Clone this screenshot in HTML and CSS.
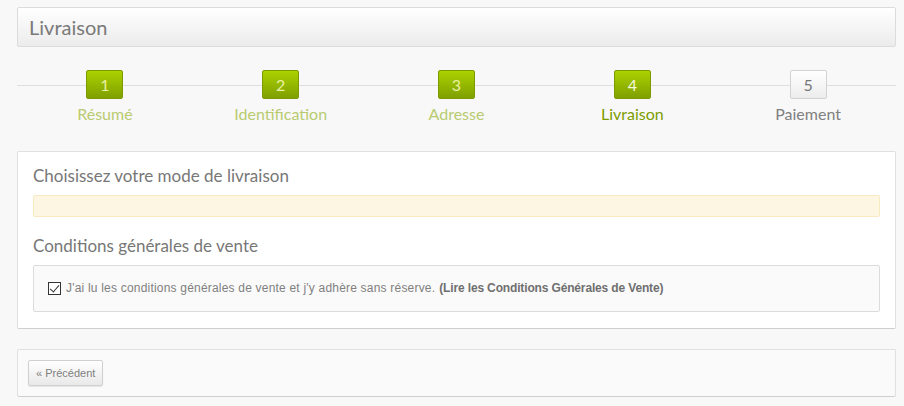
FILE: index.html
```html
<!DOCTYPE html>
<html>
<head>
  <meta charset="utf-8">
  <meta name="viewport" content="width=device-width, initial-scale=1">
  <title>Livraison</title>
  <link rel="stylesheet" href="styles.css">
</head>
<body>
  <div class="page">
    <h1 class="page-title">Livraison</h1>

    <ul class="steps">
      <li class="step step-done"><span class="step-num">1</span><span class="step-label">Résumé</span></li>
      <li class="step step-done"><span class="step-num">2</span><span class="step-label">Identification</span></li>
      <li class="step step-done"><span class="step-num">3</span><span class="step-label">Adresse</span></li>
      <li class="step step-current"><span class="step-num">4</span><span class="step-label">Livraison</span></li>
      <li class="step step-todo"><span class="step-num">5</span><span class="step-label">Paiement</span></li>
    </ul>

    <div class="panel">
      <h3 class="panel-heading">Choisissez votre mode de livraison</h3>
      <div class="alert-box"></div>

      <h3 class="panel-heading">Conditions générales de vente</h3>
      <div class="terms-box">
        <label class="terms-label">
          <input class="terms-check" type="checkbox" checked>
          <span class="terms-text">J'ai lu les conditions générales de vente et j'y adhère sans réserve.</span>
          <a class="terms-link" href="#">(Lire les Conditions Générales de Vente)</a>
        </label>
      </div>
    </div>

    <div class="footer-panel">
      <button class="prev-button">« Précédent</button>
    </div>
  </div>
</body>
</html>
```

FILE: styles.css
```css
body {
  margin: 0;
  background: #f8f8f8;
  font-family: "Liberation Sans", Arial, sans-serif;
  color: #777;
}
.page {
  padding: 7px 8px 0 17px;
}
.page-title {
  margin: 0;
  height: 38px;
  line-height: 38px;
  padding: 0 11px;
  border: 1px solid #dcdcdc;
  border-radius: 2px;
  background: linear-gradient(#ffffff, #ececec);
  font-family: Lato, sans-serif;
  font-weight: normal;
  font-size: 20px;
  color: #7a7a7a;
}

/* steps */
.steps {
  list-style: none;
  margin: 0;
  padding: 0;
  display: flex;
  background: linear-gradient(#dedede, #dedede) no-repeat 0 15px / 100% 1px;
  margin-top: 23px;
}
.step {
  flex: 1;
  display: flex;
  flex-direction: column;
  align-items: center;
}
.step-num {
  width: 35px;
  height: 27px;
  line-height: 27px;
  text-align: center;
  border: 1px solid #7d9a00;
  border-radius: 2px;
  background: linear-gradient(#abd200, #7f9f00);
  color: #e9f1a2;
  font-family: Lato, sans-serif;
  font-size: 16px;
}
.step-current .step-num {
  color: #f4f8dc;
}
.step-todo .step-num {
  border-color: #d2d2d2;
  background: linear-gradient(#ffffff, #ececec);
  color: #777;
}
.step-label {
  margin-top: 5px;
  font-family: Lato, sans-serif;
  font-size: 16px;
  color: #b8cb70;
}
.step-current .step-label {
  color: #7d9c00;
}
.step-todo .step-label {
  color: #808080;
}

/* panels */
.panel {
  margin-top: 28px;
  background: #fff;
  border: 1px solid #e0e0e0;
  border-bottom-color: #cfcfcf;
  border-radius: 2px;
  padding: 13px 15px 16px;
}
.panel-heading {
  margin: 0 0 9px;
  font-family: Lato, sans-serif;
  font-weight: normal;
  font-size: 17px;
  color: #777;
}
.alert-box {
  height: 20px;
  background: #fdf6e3;
  border: 1px solid #faeac4;
  border-radius: 2px;
  margin-bottom: 18px;
}
.terms-box {
  background: #fafafa;
  border: 1px solid #dcdcdc;
  border-radius: 2px;
  padding: 15px 15px 16px;
}
.terms-label {
  display: flex;
  align-items: center;
  gap: 4px;
  font-size: 12px;
  color: #808080;
}
.terms-text {
  letter-spacing: 0.2px;
}
.terms-check {
  appearance: none;
  -webkit-appearance: none;
  position: relative;
  margin: 0 1px 0 -1px;
  width: 13px;
  height: 13px;
  border: 1px solid #333;
  background: #fff;
}
.terms-check:checked::after {
  content: "";
  position: absolute;
  left: 3px;
  top: 0px;
  width: 4px;
  height: 8px;
  border: solid #333;
  border-width: 0 1.5px 1.5px 0;
  transform: rotate(40deg);
}
.terms-link {
  font-weight: bold;
  color: #6f6f6f;
  text-decoration: none;
  letter-spacing: -0.15px;
}

.footer-panel {
  margin-top: 20px;
  background: #fafafa;
  border: 1px solid #e0e0e0;
  border-bottom-color: #cfcfcf;
  border-radius: 2px;
  padding: 10px 10px;
}
.prev-button {
  font-family: "Liberation Sans", Arial, sans-serif;
  font-size: 11px;
  color: #808080;
  height: 26px;
  padding: 0 7px;
  border: 1px solid #d0d0d0;
  border-radius: 2px;
  background: linear-gradient(#ffffff, #e9e9e9);
  box-shadow: 0 1px 1px rgba(0, 0, 0, 0.08);
}
```
